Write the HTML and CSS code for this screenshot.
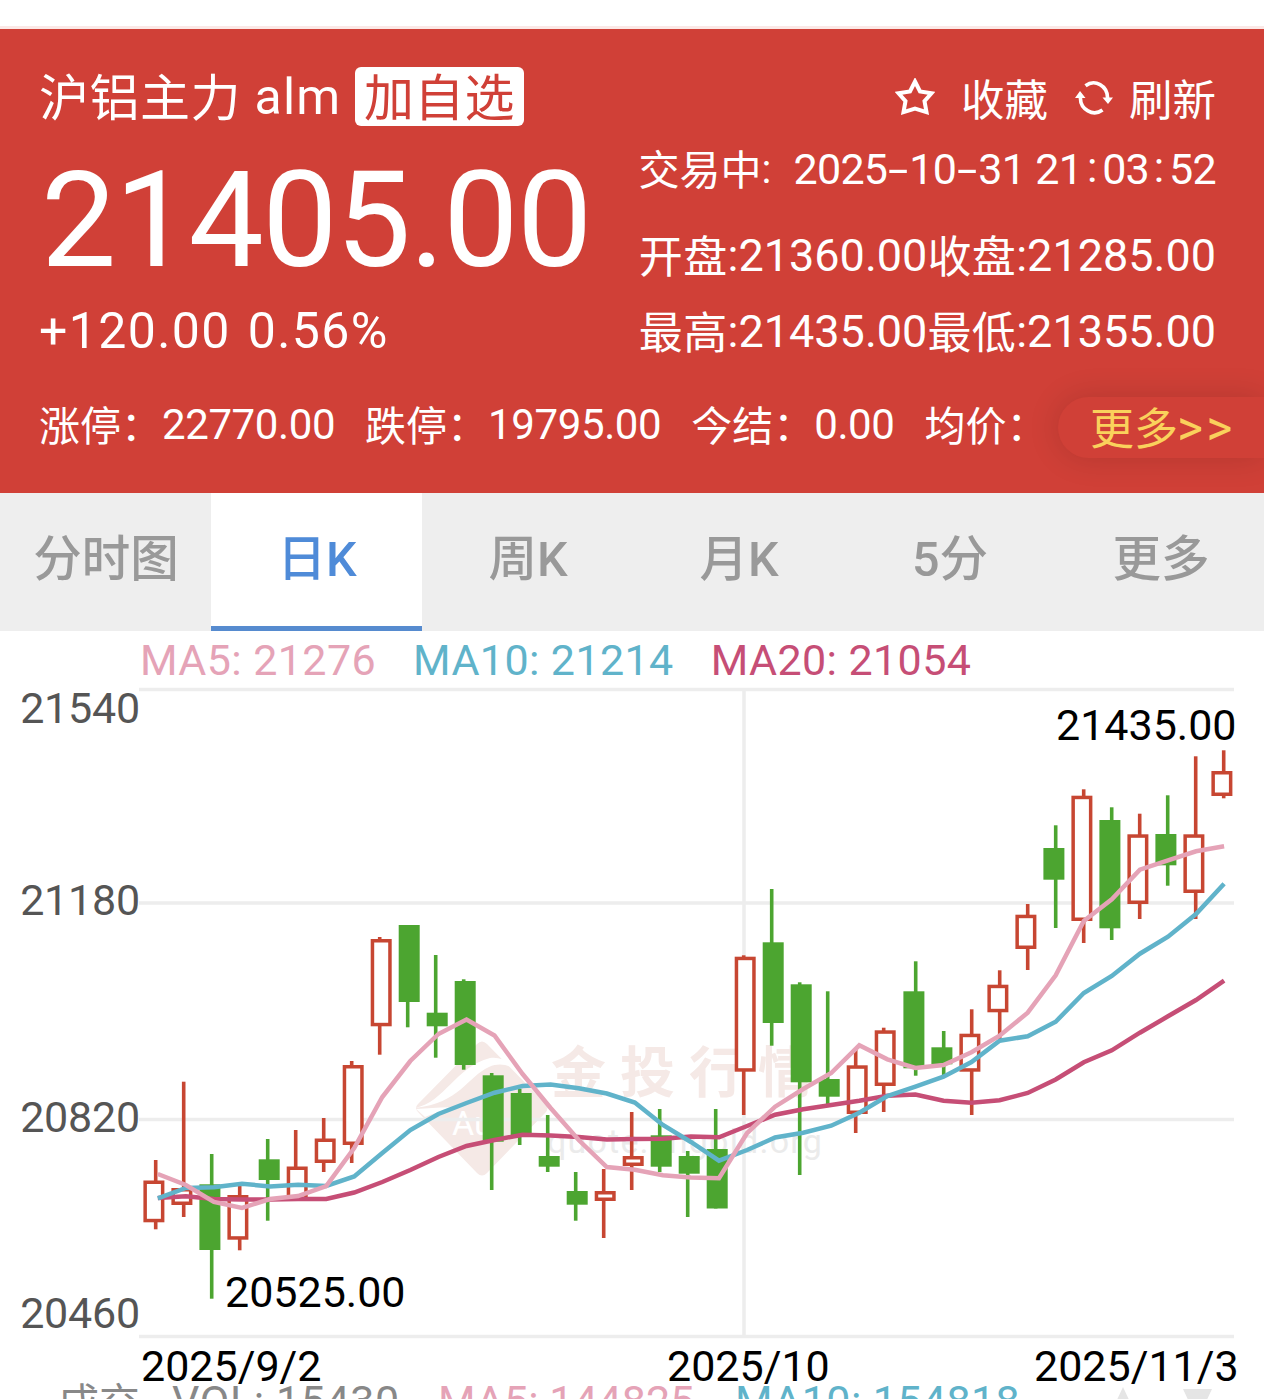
FILE: index.html
```html
<!DOCTYPE html>
<html lang="zh-CN">
<head>
    <meta charset="utf-8">
    <title>沪铝主力 alm</title>
    <link rel="stylesheet" href="styles.css">
</head>
<body>
    <div class="topbar"></div>

    <!-- Quote header -->
    <header class="quote">
        <div class="quote-main">
            <div class="quote-left">
                <div class="title"><span class="name">沪铝主力</span><span class="code"> alm </span><a class="add">加自选</a></div>
                <div class="price">21405.00</div>
                <div class="change">+120.00 0.56%</div>
            </div>
            <div class="quote-right">
                <div class="actions">
                    <svg class="icon-star" viewBox="0 0 40 38"><path d="M20 3.500 L25 13.400 L36.500 15.300 L29.500 23.200 L31.500 34.200 L20 30.700 L8.500 34.200 L10.500 23.200 L3.500 15.300 L15 13.400 Z"/></svg>
                    <span class="fav">收藏</span>
                    <svg class="icon-refresh" viewBox="0 0 38 36">
                        <path class="arc" d="M10.500 5.800 C20 -1.500 32.500 6 32.600 18"/>
                        <path class="arc" d="M27.500 30 C18 37 5.500 29.500 5.400 18"/>
                        <path class="tip" d="M27.500 17.500 H38 L33 24 Z M0 18 H10.500 L5 11 Z"/>
                    </svg>
                    <span>刷新</span>
                </div>
                <div class="status"><span><b>交易中</b>:</span><span class="time">2025<i class="dash">-</i>10<i class="dash">-</i>31 21<i class="colon">:</i>03<i class="colon">:</i>52</span></div>
                <div class="pair"><span><b>开盘</b>:21360.00</span><span><b>收盘</b>:21285.00</span></div>
                <div class="pair low"><span><b>最高</b>:21435.00</span><span><b>最低</b>:21355.00</span></div>
            </div>
        </div>
        <div class="extra">
            <span><b>涨停：</b>22770.00</span>
            <span><b>跌停：</b>19795.00</span>
            <span><b>今结：</b>0.00</span>
            <span><b>均价：</b></span>
        </div>
        <a class="more">更多<span class="arrows">&gt;&gt;</span></a>
    </header>

    <!-- Period tabs -->
    <nav class="tabs">
        <a>分时图</a>
        <a class="active">日K</a>
        <a>周K</a>
        <a>月K</a>
        <a>5分</a>
        <a>更多</a>
    </nav>

    <!-- Daily K chart -->
    <div class="chart">
        <div class="legend">
            <span class="ma5">MA5: 21276</span>
            <span class="ma10">MA10: 21214</span>
            <span class="ma20">MA20: 21054</span>
        </div>
        <svg class="plot" viewBox="0 689 1264 710">
            <!-- watermark -->
            <g class="watermark">
                <path d="M477 1044 Q482 1039 487 1044 L546 1104 Q549 1108 546 1112 L487 1173 Q482 1178 477 1173 L418 1112 Q414 1108 418 1104 Z"/>
                <path class="swoosh" d="M415 1108 C445 1102 455 1067 490 1058 C502 1056 512 1064 520 1072 C510 1065 500 1062 489 1067 C467 1077 460 1103 415 1108 Z"/>
                <path class="swoosh" d="M416 1109 Q442 1107 462 1107 Q438 1111 425 1117 Z"/>
                <text class="wm-au" x="452" y="1135">Au</text>
                <text class="wm-name" x="551" y="1092">金投行情</text>
                <text class="wm-url" x="547" y="1153">quote.cngold.org</text>
            </g>
            <!-- grid -->
            <path class="grid" d="M139 689.500 H1234 M139 903 H1234 M139 1119.500 H1234 M139 1336.500 H1234 M744 689 V1336"/>
            <g id="candles"></g>
            <g id="lines"></g>
            <!-- axis labels -->
            <g class="axis-y">
                <text x="140" y="723">21540</text>
                <text x="140" y="915">21180</text>
                <text x="140" y="1132">20820</text>
                <text x="140" y="1328">20460</text>
            </g>
            <text x="141" y="1381">2025/9/2</text>
            <text x="667" y="1381">2025/10</text>
            <text x="1034" y="1381">2025/11/3</text>
            <text x="1056" y="740">21435.00</text>
            <text x="225" y="1307">20525.00</text>
            <!-- volume panel heading -->
            <text class="vol" x="58" y="1418">成交</text>
            <text class="vol vol-num" x="172" y="1416">VOL: 15430</text>
            <text class="ma5" x="438" y="1416">MA5: 144825</text>
            <text class="ma10 vol-ma10" x="735" y="1416">MA10: 154818</text>
            <path class="toggle" d="M1123 1387 L1138 1419 H1108 Z M1183 1389 H1212 L1197.500 1420 Z"/>
        </svg>
    </div>
    <script src="chart.js"></script>
</body>
</html>
```

FILE: styles.css
```css
* {
    box-sizing: border-box;
}
body {
    margin: 0;
    height: 1399px;
    overflow: hidden;
    background: #fff;
    font-family: Roboto, "Noto Sans CJK SC", sans-serif;
}
.topbar {
    height: 29px;
    border-bottom: 3px solid #fbe8e6;
}

/* Quote header */
.quote {
    position: relative;
    height: 464px;
    padding: 38px 0 0 39px;
    overflow: hidden;
    background: #d04037;
    color: #fff;
    white-space: nowrap;
}
/* Chinese labels sit a little lower than the digits */
.quote b {
    font-weight: normal;
    vertical-align: -2px;
    line-height: 1;
}
.quote-main {
    display: flex;
    justify-content: space-between;
    padding-right: 48px;
    height: 328px;
}
.title {
    display: flex;
    font-size: 50px;
    line-height: 61px;
    white-space: pre;
}
.name {
    height: 61px;
    line-height: 65px;
    letter-spacing: 0.5px;
}
.code {
    letter-spacing: 1.2px;
}
.add {
    height: 59px;
    padding: 0 9px;
    border-radius: 6px;
    background: #fff;
    color: #d04037;
    line-height: 64px;
    letter-spacing: 0.3px;
}
.price {
    margin: 23px 0 0 2px;
    font-size: 134px;
    line-height: 140px;
    letter-spacing: -1.6px;
}
.change {
    margin-top: 10px;
    font-size: 50px;
    line-height: 60px;
    letter-spacing: 1.4px;
    word-spacing: 3px;
}
.quote-right {
    display: flex;
    flex-direction: column;
    align-items: flex-end;
}
.actions {
    display: flex;
    align-items: center;
    height: 60px;
    margin-top: 3px;
    font-size: 43.5px;
    line-height: 64px;
}
.icon-star {
    width: 40px;
    height: 38px;
    margin: 0 26px 6px 0;
    fill: none;
    stroke: #fff;
    stroke-width: 4;
}
.fav,
.fav ~ span {
    padding-top: 3px;
}
.fav {
    margin-right: 27px;
}
.icon-refresh {
    width: 38px;
    height: 36px;
    margin: 0 16px 4px 0;
}
.icon-refresh .arc {
    fill: none;
    stroke: #fff;
    stroke-width: 3.6;
}
.icon-refresh .tip {
    fill: #fff;
}
.status {
    display: flex;
    height: 60px;
    margin-top: 9px;
    font-size: 41px;
    line-height: 60px;
}
.time {
    margin-left: 22px;
    font-size: 43px;
    letter-spacing: -0.7px;
}
.time i {
    display: inline-block;
    font-style: normal;
    text-align: center;
    letter-spacing: 0;
}
.dash {
    width: 22px;
    transform: scaleX(1.7);
}
.colon {
    width: 20px;
    transform: translateY(-2px);
}
.pair {
    display: flex;
    height: 60px;
    margin-top: 27px;
    font-size: 45px;
    line-height: 60px;
}
.low {
    margin-top: 16px;
}
.pair b {
    font-size: 44px;
    letter-spacing: 0.4px;
}
.extra {
    display: flex;
    gap: 30px;
    height: 60px;
    font-size: 42px;
    line-height: 60px;
    letter-spacing: -0.4px;
}
.extra b {
    font-size: 41px;
    letter-spacing: 0;
}
.more {
    position: absolute;
    left: 1058px;
    right: 0;
    top: 368px;
    height: 61px;
    padding-left: 32px;
    border-radius: 31px 0 0 31px;
    background: #d04037;
    box-shadow: 0 0 32px rgba(0, 0, 0, 0.14);
    color: #fad15c;
    font-size: 44px;
    line-height: 67px;
}
.arrows {
    margin-left: -1px;
    font-size: 50px;
    line-height: 1;
    letter-spacing: 3px;
}

/* Period tabs */
.tabs {
    display: grid;
    grid-template-columns: repeat(6, 211px);
    height: 138px;
    background: #eee;
}
.tabs a {
    padding-left: 1px;
    color: #999;
    font-size: 48.5px;
    font-weight: 500;
    line-height: 133px;
    text-align: center;
}
.tabs .active {
    height: 138px;
    border-bottom: 5px solid #568bcf;
    background: #fff;
    color: #4f8bd8;
}

/* Daily K chart */
.legend {
    display: flex;
    gap: 37px;
    height: 58px;
    padding-left: 140px;
    font-size: 43px;
    line-height: 58px;
    letter-spacing: 0.4px;
}
.plot {
    display: block;
    width: 1264px;
    height: 710px;
    overflow: visible;
    font-size: 43px;
}
.ma5 {
    color: #e5a3b7;
    fill: #e5a3b7;
}
.ma10 {
    color: #60b3ca;
    fill: #60b3ca;
}
.ma20 {
    color: #c64e76;
    fill: #c64e76;
}
.axis-y text {
    fill: #555;
    text-anchor: end;
    letter-spacing: -0.2px;
}
.vol {
    fill: #888;
    font-size: 41px;
}
.vol-num {
    font-size: 43px;
    letter-spacing: 0.6px;
}
.vol-ma10 {
    letter-spacing: 0.4px;
}
.grid {
    fill: none;
    stroke: #ededed;
    stroke-width: 3.5;
}
.toggle {
    fill: #e5e5e5;
}
.watermark {
    fill: #f5e9e6;
}
.swoosh, .wm-au {
    fill: #fff;
}
.wm-au {
    font-size: 34px;
}
.wm-name {
    font-size: 55px;
    font-weight: bold;
    letter-spacing: 14px;
}
.wm-url {
    fill: #ebebeb;
    font-size: 34px;
    letter-spacing: 1.2px;
}
.up {
    fill: #fff;
    stroke: #c74632;
    stroke-width: 3.5;
}
.up-wick {
    fill: #c74632;
}
.down {
    fill: #4ca530;
}
.line {
    fill: none;
    stroke-width: 4.5;
}
.line.ma5 { stroke: #e5a3b7; }
.line.ma10 { stroke: #60b3ca; }
.line.ma20 { stroke: #c64e76; }
```

FILE: chart.js
```js
// high, body top, body bottom, low, 1 = up / 0 = down
var candles = [
    [1160, 1180.5, 1222.3, 1229.3, 1], [1081.7, 1188, 1205, 1217, 1], [1154, 1184.3, 1250, 1298.7, 0],
    [1185.7, 1195, 1239.7, 1250.3, 1], [1139, 1159.3, 1180, 1220.7, 0], [1130, 1166.5, 1200, 1200, 1],
    [1118, 1138.5, 1163, 1172, 1], [1061, 1065, 1145, 1163, 1], [937, 939, 1026.3, 1054.7, 1],
    [925, 925, 1002, 1027.3, 0], [955, 1012.7, 1026.3, 1057.7, 0], [979.3, 981, 1065, 1069.7, 0],
    [1073, 1075.3, 1141.7, 1190, 0], [1089, 1093, 1135, 1145, 0], [1115, 1156, 1166.7, 1172, 0],
    [1172, 1191, 1204.7, 1220.7, 0], [1169, 1191, 1201, 1238, 1], [1112, 1156, 1166, 1190, 1],
    [1109, 1135.3, 1166.7, 1172, 0], [1151, 1156, 1173.7, 1217, 0], [1109, 1149, 1208.5, 1208.5, 0],
    [955.3, 956.7, 1071.7, 1115, 1], [889, 942.3, 1023, 1045.7, 0], [982.3, 984.3, 1082.3, 1175, 0],
    [991.3, 1079, 1096.7, 1105, 0], [1050, 1065.3, 1114, 1133, 1], [1027.7, 1030.3, 1086, 1112, 1],
    [961.3, 991.3, 1068.3, 1075.7, 0], [1031, 1047.3, 1064.3, 1076.7, 0], [1009.3, 1033.7, 1071.7, 1115, 1],
    [970.3, 984.7, 1012.3, 1040, 1], [904, 914.7, 949, 970, 1], [825.3, 848, 879.7, 928, 0],
    [789.3, 795.7, 921, 943, 1], [807.3, 820, 928.3, 940, 0], [813.7, 834.3, 904, 919, 1],
    [795.3, 834, 865.3, 885.7, 0], [756.3, 834.3, 893, 919, 1], [750.3, 771, 796, 798.3, 1]
];

var lines = {
    ma20: [1198, 1196.3, 1199, 1199.5, 1199.5, 1199, 1199, 1192.5, 1182, 1170, 1157, 1146, 1140, 1134.7, 1135.5, 1137, 1139.5, 1139, 1138.7, 1136.5, 1137.3, 1126, 1114.7, 1109.3, 1105, 1100.7, 1095.7, 1094.5, 1100.7, 1102.7, 1100.3, 1093, 1079.5, 1062.3, 1050.3, 1032.7, 1016.3, 1000, 980.7],
    ma10: [1198.3, 1188, 1187.3, 1183.7, 1186.5, 1184.7, 1186, 1176.5, 1153, 1130, 1114, 1103, 1092.7, 1086, 1084.5, 1088.3, 1093.5, 1102.5, 1125, 1142, 1160.7, 1150, 1137.5, 1132.7, 1125.7, 1112.7, 1096, 1086.7, 1076.7, 1062, 1040.7, 1036.3, 1021.7, 993, 976, 953.7, 936.7, 914, 883.7],
    ma5: [1174, 1185, 1202, 1208, 1199, 1196, 1186, 1148, 1097, 1061, 1034, 1019.5, 1035.5, 1074, 1108, 1140, 1167, 1169.7, 1175.3, 1177.5, 1178.3, 1133, 1106.7, 1089, 1073, 1045.3, 1059.3, 1068, 1065, 1052.3, 1035.7, 1012.7, 975.3, 921, 899.3, 869.7, 860.3, 851.3, 846.3]
};

function add(parent, tag, attrs) {
    var el = document.createElementNS("http://www.w3.org/2000/svg", tag);
    for (var key in attrs) {
        el.setAttribute(key, attrs[key]);
    }
    document.getElementById(parent).appendChild(el);
}

// Draw wick first, then the body over it
candles.forEach(function (c, i) {
    var x = 155.7 + 28 * i + (i > 26 ? 4 : 0);
    var left = x - (i < 4 || i > 26 ? 12.3 : 9);
    add("candles", "rect", { "class": c[4] ? "up-wick" : "down", x: x - 1.8, y: c[0], width: 3.6, height: c[3] - c[0] });
    if (c[4]) {
        add("candles", "rect", { "class": "up", x: left + 1.75, y: c[1] + 1.75, width: 17.5, height: c[2] - c[1] - 3.5 });
    } else {
        add("candles", "rect", { "class": "down", x: left, y: c[1], width: 21, height: c[2] - c[1] });
    }
});

// Moving averages
for (var name in lines) {
    var points = lines[name].map(function (y, i) {
        return (157.8 + 28.06 * i).toFixed(1) + "," + y;
    });
    add("lines", "polyline", { "class": "line " + name, points: points.join(" ") });
}
```
